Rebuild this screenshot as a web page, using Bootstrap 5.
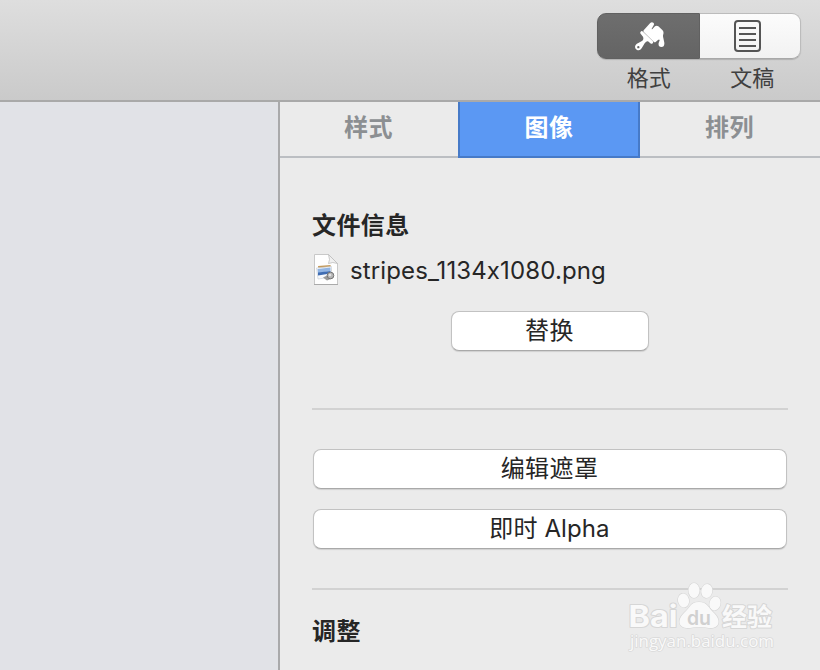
<!DOCTYPE html>
<html lang="zh-CN">
<head>
<meta charset="utf-8">
<meta name="viewport" content="width=device-width, initial-scale=1">
<title>图像</title>
<link href="https://cdn.jsdelivr.net/npm/bootstrap@5.3.0/dist/css/bootstrap.min.css" rel="stylesheet">
<style>
body{font-family:Inter,"Noto Sans CJK SC",sans-serif;font-size:24px;line-height:34px;color:#262626;background:#ebebeb}
.window{height:670px}
.toolbar{height:102px;padding:13px 19px 0 0;background:linear-gradient(#dedede,#cacaca);border-bottom:2px solid #a9a9a9}
.modes{width:204px}
.segments{height:46px;border-radius:9px;box-shadow:0 1px 1px rgba(0,0,0,.16)}
.segment{padding:0;border:1px solid #bcbcbc;border-bottom-color:#a8a8a8;background:linear-gradient(#fcfcfc,#f2f2f2)}
.segment.left{border-color:#616161;background:linear-gradient(#6e6e6e,#646464);border-radius:9px 0 0 9px;flex:0 0 103px}
.segment.right{border-left:0;border-radius:0 9px 9px 0;flex:0 0 101px}
.segment svg{display:block}
.brush{margin:2px 0 0 2px}
.sheet{margin-left:33px}
.mode-label{font-size:22px;line-height:32px;color:#404040;margin-top:3px;padding-left:1px}
.canvas-area{width:280px;background:#e1e2e7;border-right:2px solid #a9a9ab}
.tabs{height:56px}
.tabs .nav-link{padding:9px 0 0;height:56px;color:#8c8f92;font-weight:700;line-height:34px;letter-spacing:.4px;border-radius:0;border-bottom:2px solid #bbbec2;flex:0 0 180px}
.tabs .nav-link:first-child{flex-basis:178px;padding-right:1px}
.tabs .nav-link:last-child{padding-right:1px}
.tabs .nav-link.active{flex-basis:182px;background:#5b98f3;color:#fff;border:2px solid #467ac8;border-top:0}
.inspector{padding:51px 32px 0}
.section-title{font-size:24px;line-height:34px;font-weight:700;letter-spacing:.4px;margin:0}
.file-row{margin-top:9px}
.file-name{letter-spacing:.13px;padding:2px 0 0 11px}
.replace-row{margin-top:23px;line-height:0}
.push{height:40px;padding:0 1px 0 0;border:1px solid #c2c2c2;border-bottom-color:#a9a9a9;border-radius:8px;background:#fff;color:#262626;font-size:24px;line-height:36px;letter-spacing:.4px;box-shadow:0 1px 1px rgba(0,0,0,.12)}
.push.latin{letter-spacing:.1px}
.push span{display:block;margin-top:-1px}
.replace{width:198px}
.rule{height:2px;background:#d2d2d2}
.rule.first{margin-top:57px}
.rule.second{margin-top:39px}
.mask-buttons{margin:39px 1px 0;row-gap:20px}
.adjust{margin-top:25px}
.watermark{left:620px;top:578px;z-index:2}
</style>
<script src="https://cdn.jsdelivr.net/npm/bootstrap@5.3.0/dist/js/bootstrap.bundle.min.js"></script>
</head>
<body>
<div class="window d-flex flex-column position-relative overflow-hidden">
  <header class="toolbar d-flex justify-content-end flex-shrink-0">
    <div class="modes">
      <div class="segments d-flex">
        <button class="segment left d-flex align-items-center justify-content-center" aria-label="格式">
          <svg class="brush" width="30" height="30" viewBox="0 0 90 90" fill="#fff"><path d="M26 25L45 4Q50-2 55 2Q59 5 56 10L50 20Q50 23 53 20L60 13Q65 9 70 13L82 24Q87 29 85 36Q83 42 85 48L88 62Q89 75 79 75Q69 74 71 63L74 55Q73 50 69 54L62 60Q59 62 56 59L27 31Q24 28 26 25Z"/><path d="M17 29Q20 25 24 29L53 57Q56 61 53 64Q50 67 46 64L39 58Q34 57 29 64L20 79Q14 88 5 83Q-3 77 2 69Q5 65 10 63L22 56Q27 52 24 44L18 37Q14 33 17 29ZM10 72A3.5 3.5 0 1 0 10 79A3.5 3.5 0 1 0 10 72Z" fill-rule="evenodd"/></svg>
        </button>
        <button class="segment right d-flex align-items-center" aria-label="文稿">
          <svg class="sheet" width="28" height="34" viewBox="0 0 28 34" fill="none" stroke="#555" stroke-width="2"><rect x="2" y="2" width="25" height="30" rx="3"/><path d="M6 9h17M6 15h17M6 21h17M6 27h17"/></svg>
        </button>
      </div>
      <div class="mode-label d-flex text-center"><span class="w-50">格式</span><span class="w-50 ps-1">文稿</span></div>
    </div>
  </header>
  <div class="d-flex flex-grow-1">
    <div class="canvas-area flex-shrink-0"></div>
    <aside class="flex-grow-1">
      <nav class="tabs nav flex-nowrap text-center">
        <a class="nav-link">样式</a><a class="nav-link active">图像</a><a class="nav-link">排列</a>
      </nav>
      <section class="inspector">
        <h2 class="section-title">文件信息</h2>
        <div class="file-row d-flex align-items-center">
          <svg width="27" height="34" viewBox="0 0 27 34"><path d="M2.5 1.5H16.5L25.5 10.5V31.5H2.5Z" fill="#fefefe" stroke="#c8c8c8"/><path d="M2 31.5H26" stroke="#aaa"/><path d="M16.5 1.5Q18.5 7 16.5 10.5Q20.5 8.5 25.5 10.5Z" fill="#f0f0f0" stroke="#bbb" stroke-width=".8"/><path d="M6 13L18.5 12L19.5 18L7 20Z" fill="#c49a5b"/><path d="M4.5 15L19.5 13.5V24L6 26Z" fill="#f7f9fc" stroke="#c5cbd3" stroke-width=".6"/><path d="M5.5 16L18.5 14.5V18L6 20Z" fill="#91b5e4"/><path d="M6 19.5L18.5 18V20.5L6 22.5Z" fill="#3f6db3"/><path d="M11 24.5L15 22.5L20 25.5L15 27.5Z" fill="#999"/><circle cx="18.5" cy="22.5" r="3.3" fill="#b5b5b5" stroke="#747474"/><circle cx="18" cy="22" r="1.3" fill="#e2e2e2"/></svg>
          <span class="file-name text-nowrap">stripes_1134x1080.png</span>
        </div>
        <div class="replace-row text-center"><button class="push replace"><span>替换</span></button></div>
        <div class="rule first"></div>
        <div class="mask-buttons d-grid">
          <button class="push"><span>编辑遮罩</span></button>
          <button class="push latin"><span>即时 Alpha</span></button>
        </div>
        <div class="rule second"></div>
        <h2 class="section-title adjust">调整</h2>
      </section>
    </aside>
  </div>
  <svg class="watermark position-absolute" width="165" height="82" viewBox="0 0 165 82" fill="#f9f9f9" stroke="#d6d6d6" paint-order="stroke" stroke-linejoin="round">
    <g stroke-width="1.2"><ellipse cx="74" cy="12.5" rx="5.5" ry="7.5"/><ellipse cx="86.8" cy="13" rx="5.5" ry="7" transform="rotate(12 86.8 13)"/><ellipse cx="63.5" cy="22.5" rx="5.5" ry="7" transform="rotate(-12 63.5 22.5)"/><ellipse cx="95" cy="25.5" rx="5.5" ry="7" transform="rotate(15 95 25.5)"/><path d="M79 24C88 24 88 30 94 35C102 43 99 51 89 50Q79 48 70 50C59 51 56 43 64 35C71 29 70 24 79 24Z"/></g>
    <g font-family="Inter,sans-serif" font-weight="700"><text x="8.5" y="49" font-size="30" textLength="49" lengthAdjust="spacingAndGlyphs" stroke-width="2">Bai</text><text x="67" y="46.5" font-size="20" font-weight="600" textLength="24" lengthAdjust="spacingAndGlyphs" fill="#d0d0d0" stroke="none">du</text></g>
    <text x="102" y="47.5" font-family="'Noto Sans CJK SC',sans-serif" font-weight="700" font-size="25" stroke-width="2">经验</text>
    <text x="10" y="69" font-family="'Open Sans',sans-serif" font-size="15.5" textLength="144" lengthAdjust="spacingAndGlyphs" stroke="#dadada" stroke-width="1.5">jingyan.baidu.com</text>
  </svg>
</div>
</body>
</html>
